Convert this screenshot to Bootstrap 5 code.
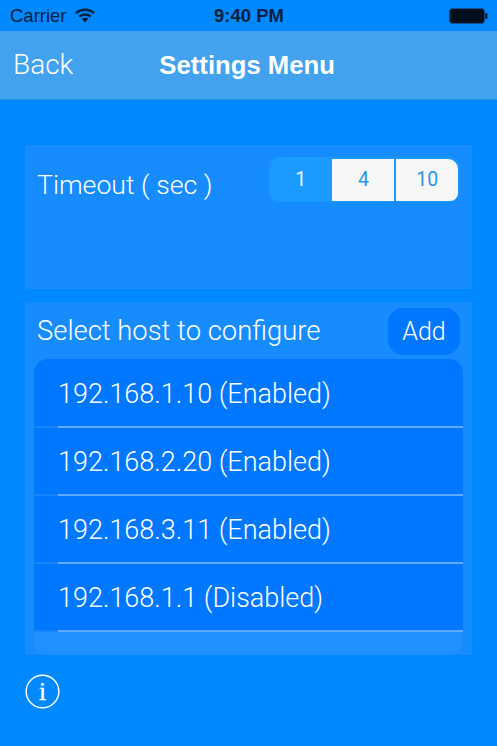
<!DOCTYPE html>
<html lang="en">
<head>
  <meta charset="UTF-8">
  <meta name="viewport" content="width=device-width, initial-scale=1.0">
  <title>Settings Menu</title>
  <link href="https://cdn.jsdelivr.net/npm/bootstrap@5.3.2/dist/css/bootstrap.min.css" rel="stylesheet">
  <style>
    body {
        background: #0088ff;
        font-family: Roboto, "Liberation Sans", Arial, sans-serif;
        font-weight: 300;
        color: #fff;
        height: 746px;
        overflow: hidden;
    }
    .status-bar {
        height: 31px;
        padding: 0 9px 0 10px;
        color: #04213f;
        font-family: "Liberation Sans", Arial, sans-serif;
        font-weight: 400;
        font-size: 18.5px;
    }
    .status-side { width: 180px; }
    .status-time { font-weight: 700; font-size: 18.5px; }
    .top-nav {
        height: 69px;
        padding: 0 13px;
        background: #42a2ee;
        border-bottom: 1px solid #1f8fe8;
        font-size: 28px;
    }
    .nav-title {
        font-family: "Liberation Sans", Arial, sans-serif;
        font-weight: 700;
        font-size: 25.7px;
        margin-left: 86px;
    }
    .settings-wrap { padding: 45px 25px 0; }
    .settings-panel { background: #178cff; }
    .timeout-panel {
        height: 144px;
        padding: 12px 13px 0 12px;
        margin-bottom: 13px;
    }
    .panel-label { font-size: 27.4px; }
    .timeout-label { font-size: 26.7px; margin-top: 8px; }
    .seg-group {
        width: 190px;
        height: 45px;
        padding: 1.5px 1px 1.5px 0;
        background: #1a9aff;
        border-radius: 9px;
    }
    .seg-group .btn {
        width: 63px;
        padding: 0;
        border: 0;
        border-radius: 0;
        font-weight: 400;
        font-size: 19.5px;
        background: #f7f7f7;
        color: #2a95e8;
    }
    .seg-group .btn:not(:first-child) { margin-left: 0; }
    .seg-group .btn:last-child {
        border-left: 2px solid #1a9aff;
        border-radius: 0 10px 8px 0;
    }
    .seg-group .btn.seg-on {
        background: transparent;
        color: #e6f4ff;
    }
    .hosts-panel {
        height: 353px;
        padding: 6px 9px 0;
    }
    .hosts-head { height: 51px; padding-left: 3px; }
    .hosts-title { margin-top: 3px; }
    .add-btn {
        width: 72px;
        height: 47px;
        padding: 0;
        margin-right: 3px;
        border: 0;
        border-radius: 15px;
        background: #0077ff;
        color: #fff;
        font-weight: 300;
        font-size: 25px;
    }
    .host-list {
        height: 296px;
        background: #2090ff;
        border-radius: 14px;
        overflow: hidden;
    }
    .host-list .list-group-item {
        background: #0077ff;
        border: 0;
        border-bottom: 2px solid #1583ff;
        border-radius: 0;
        padding: 0 0 0 24px;
        color: #fff;
        font-size: 27px;
    }
    .host-list .list-group-item:first-child { padding-top: 1px; }
    .host-row {
        height: 68px;
        margin-bottom: -2px;
        padding-top: 14px;
        border-bottom: 2px solid #5fabff;
    }
    .info-link { padding-top: 19px; }
  </style>
</head>
<body>

<!-- Status bar -->
<div class="status-bar d-flex align-items-center justify-content-between">
  <div class="status-side d-flex align-items-center gap-2">
    <span>Carrier</span>
    <svg width="20" height="15" viewBox="0 0 20 15" fill="none" stroke="#04213f" stroke-width="2.4">
      <path d="M1 5.2c5-4.6 13-4.6 18 0"/>
      <path d="M4.2 8.6c3.2-2.8 8.4-2.8 11.6 0"/>
      <path d="M6.6 10.8c1.8-1.5 5-1.5 6.8 0L10 14.6z" fill="#04213f" stroke="none"/>
    </svg>
  </div>
  <span class="status-time">9:40 PM</span>
  <div class="status-side d-flex justify-content-end">
    <svg width="39" height="16" viewBox="0 0 39 16">
      <rect x="0.5" y="0.5" width="35" height="15" rx="3" fill="#04101f" stroke="#0d4f8f"/>
      <rect x="36" y="5" width="2.5" height="6" rx="1" fill="#04213f"/>
    </svg>
  </div>
</div>

<!-- Nav bar -->
<nav class="top-nav d-flex align-items-center">
  <a class="text-white text-decoration-none" href="#">Back</a>
  <span class="nav-title">Settings Menu</span>
</nav>

<div class="settings-wrap">
  <!-- Timeout -->
  <div class="settings-panel timeout-panel d-flex justify-content-between align-items-start">
    <span class="panel-label timeout-label">Timeout ( sec )</span>
    <div class="btn-group seg-group" role="group">
      <button type="button" class="btn seg-on">1</button>
      <button type="button" class="btn">4</button>
      <button type="button" class="btn">10</button>
    </div>
  </div>

  <!-- Hosts -->
  <div class="settings-panel hosts-panel">
    <div class="hosts-head d-flex align-items-start justify-content-between">
      <span class="panel-label hosts-title">Select host to configure</span>
      <button type="button" class="btn add-btn">Add</button>
    </div>
    <ul class="list-group host-list">
      <li class="list-group-item"><div class="host-row">192.168.1.10 (Enabled)</div></li>
      <li class="list-group-item"><div class="host-row">192.168.2.20 (Enabled)</div></li>
      <li class="list-group-item"><div class="host-row">192.168.3.11 (Enabled)</div></li>
      <li class="list-group-item"><div class="host-row">192.168.1.1 (Disabled)</div></li>
    </ul>
  </div>

  <div class="info-link">
    <svg width="35" height="35" viewBox="0 0 36 36" fill="none">
      <circle cx="18" cy="18" r="16.8" stroke="#fff" stroke-width="1.5"/>
      <text x="18" y="27" text-anchor="middle" fill="#fff" stroke="#fff" stroke-width="0.4" font-family="Liberation Serif, serif" font-size="26">i</text>
    </svg>
  </div>
</div>

</body>
</html>
